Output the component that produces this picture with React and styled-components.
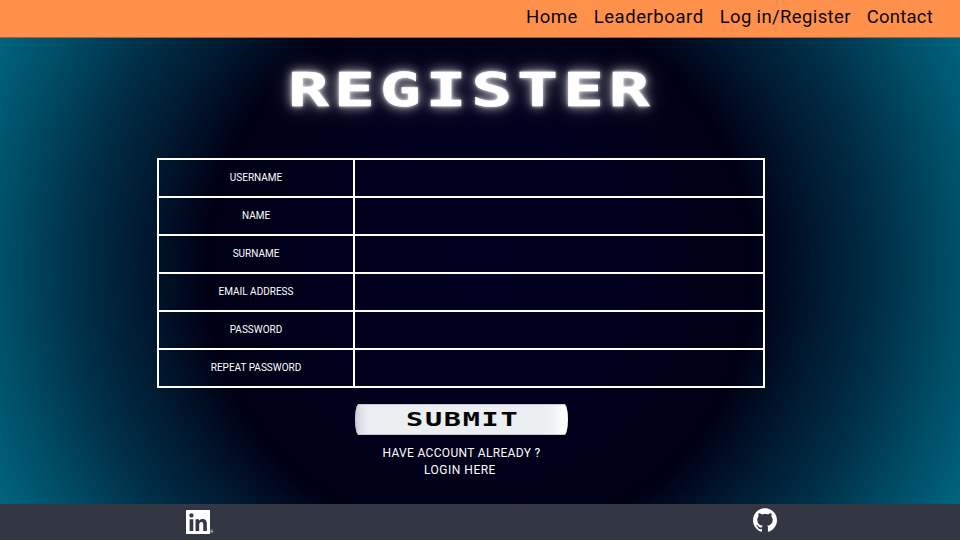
import React from 'react';
import styled, { createGlobalStyle } from 'styled-components';
import { SiGithub } from 'react-icons/si';

const GlobalStyle = createGlobalStyle`
  * { box-sizing: border-box; }
  body { margin: 0; font-family: Roboto, sans-serif; color: #fff; }
`;

const Page = styled.div`
  width: 960px;
  height: 540px;
  overflow: hidden;
  display: grid;
  grid-template-rows: 38px 466px 36px;
  background: radial-gradient(circle 550px at 480px 270px, #010020 0, #01001e 25%, #000015 50%, #00142a 59%, #002f48 73%, #004f68 87%, #006680 98%);
`;

const Header = styled.header`
  background: #ff914d;
  border-bottom: 1px solid #a5603f;
`;

const Nav = styled.nav`
  display: flex;
  justify-content: flex-end;
  gap: 16px;
  padding: 7px 27px 0 0;
`;

const NavLink = styled.a`
  color: #0b0806;
  font-size: 18.5px;
  line-height: 21px;
  letter-spacing: ${(p) => p.$tracking}px;
  white-space: nowrap;
`;

const Main = styled.main`
  display: flex;
  flex-direction: column;
`;

const Title = styled.h1`
  margin: 23px 0 0 287.5px;
  width: max-content;
  height: 97px;
  font: bold 47px/58px "DejaVu Sans Mono", monospace;
  letter-spacing: 3.3px;
  transform: scaleX(1.45);
  transform-origin: 0 0;
  -webkit-text-stroke: 0.5px #fff;
  text-shadow: 0 0 3px #fff, 0 0 9px rgba(255, 255, 255, 0.8), 0 0 20px rgba(255, 255, 255, 0.35);
`;

const Form = styled.form`
  width: 608px;
  margin-left: 157px;
  border: 2px solid #fff;
`;

const Row = styled.div`
  display: grid;
  grid-template-columns: 196px 1fr;
  height: 38px;
  border-bottom: 2px solid #fff;
  &:last-child { height: 36px; border-bottom: 0; }
`;

const Label = styled.label`
  display: flex;
  align-items: center;
  justify-content: center;
  padding-bottom: 1px;
  border-right: 2px solid #fff;
  font-size: 10px;
`;

const Field = styled.div`
  min-width: 0;
`;

const Actions = styled.div`
  display: flex;
  flex-direction: column;
  align-items: center;
  width: 608px;
  margin: 16px 0 0 157.5px;
`;

const Submit = styled.button`
  width: 213px;
  height: 31px;
  padding: 0 0 0 50.5px;
  border: 0;
  border-radius: 4px / 50%;
  text-align: left;
  color: #050505;
  background: linear-gradient(90deg, #c9cad8 0, #dfe2e8 6px, #ebeff2 14px, #ebeff2 190px, #f2f4f7 200px, #fff 208px);
  box-shadow: inset 0 1px #c7cad2, inset 0 -1px #c7cad2;
`;

const SubmitText = styled.span`
  display: inline-block;
  font: bold 19px/31px "DejaVu Sans Mono", monospace;
  letter-spacing: 1.15px;
  transform: scaleX(1.5);
  transform-origin: 0 0;
`;

const Note = styled.p`
  margin: ${(p) => p.$top}px ${(p) => p.$shift || 0}px 0 0;
  font-size: 12px;
  line-height: 17px;
  letter-spacing: ${(p) => p.$tracking}px;
`;

const Footer = styled.footer`
  display: flex;
  justify-content: space-between;
  background: #323743;
  padding: 4px 183px 0 185.5px;
`;

const LinkedIn = styled.a`
  display: flex;
  align-items: flex-end;
  height: 26px;
  color: #fff;
  font-size: 4px;
  line-height: 4px;
`;

const GitHub = styled.a`
  height: 24px;
  color: #fff;
`;

const links = [
  ['Home', 0.45],
  ['Leaderboard', 0.55],
  ['Log in/Register', 0.37],
  ['Contact', 0.22],
];

const fields = ['USERNAME', 'NAME', 'SURNAME', 'EMAIL ADDRESS', 'PASSWORD', 'REPEAT PASSWORD'];

export default function App() {
  return (
    <>
      <GlobalStyle />
      <Page>
        <Header>
          <Nav>
            {links.map(([text, tracking]) => (
              <NavLink key={text} $tracking={tracking}>{text}</NavLink>
            ))}
          </Nav>
        </Header>
        <Main>
          <Title>REGISTER</Title>
          <Form>
            {fields.map((name) => (
              <Row key={name}>
                <Label>{name}</Label>
                <Field />
              </Row>
            ))}
          </Form>
          <Actions>
            <Submit type="button"><SubmitText>SUBMIT</SubmitText></Submit>
            <Note $top={10} $tracking={0.32}>HAVE ACCOUNT ALREADY ?</Note>
            <Note $top={0} $shift={3} $tracking={0.5}>LOGIN HERE</Note>
          </Actions>
        </Main>
        <Footer>
          <LinkedIn>
            <svg width="24.5" height="24.5" viewBox="0 0 24 24" fill="currentColor">
              <path d="M20.447 20.452h-3.554v-5.569c0-1.328-.027-3.037-1.852-3.037-1.853 0-2.136 1.445-2.136 2.939v5.667H9.351V9h3.414v1.561h.046c.477-.9 1.637-1.85 3.37-1.85 3.601 0 4.267 2.37 4.267 5.455v6.286zM5.337 7.433c-1.144 0-2.063-.926-2.063-2.065 0-1.138.92-2.063 2.063-2.063 1.14 0 2.064.925 2.064 2.063 0 1.139-.925 2.065-2.064 2.065zm1.782 13.019H3.555V9h3.564v11.452zM23.2 0H.8C.3 0 0 .3 0 .8v22.4c0 .5.3.8.8.8h22.4c.5 0 .8-.3.8-.8V.8c0-.5-.3-.8-.8-.8z" />
            </svg>
            ®
          </LinkedIn>
          <GitHub><SiGithub size={24} /></GitHub>
        </Footer>
      </Page>
    </>
  );
}
